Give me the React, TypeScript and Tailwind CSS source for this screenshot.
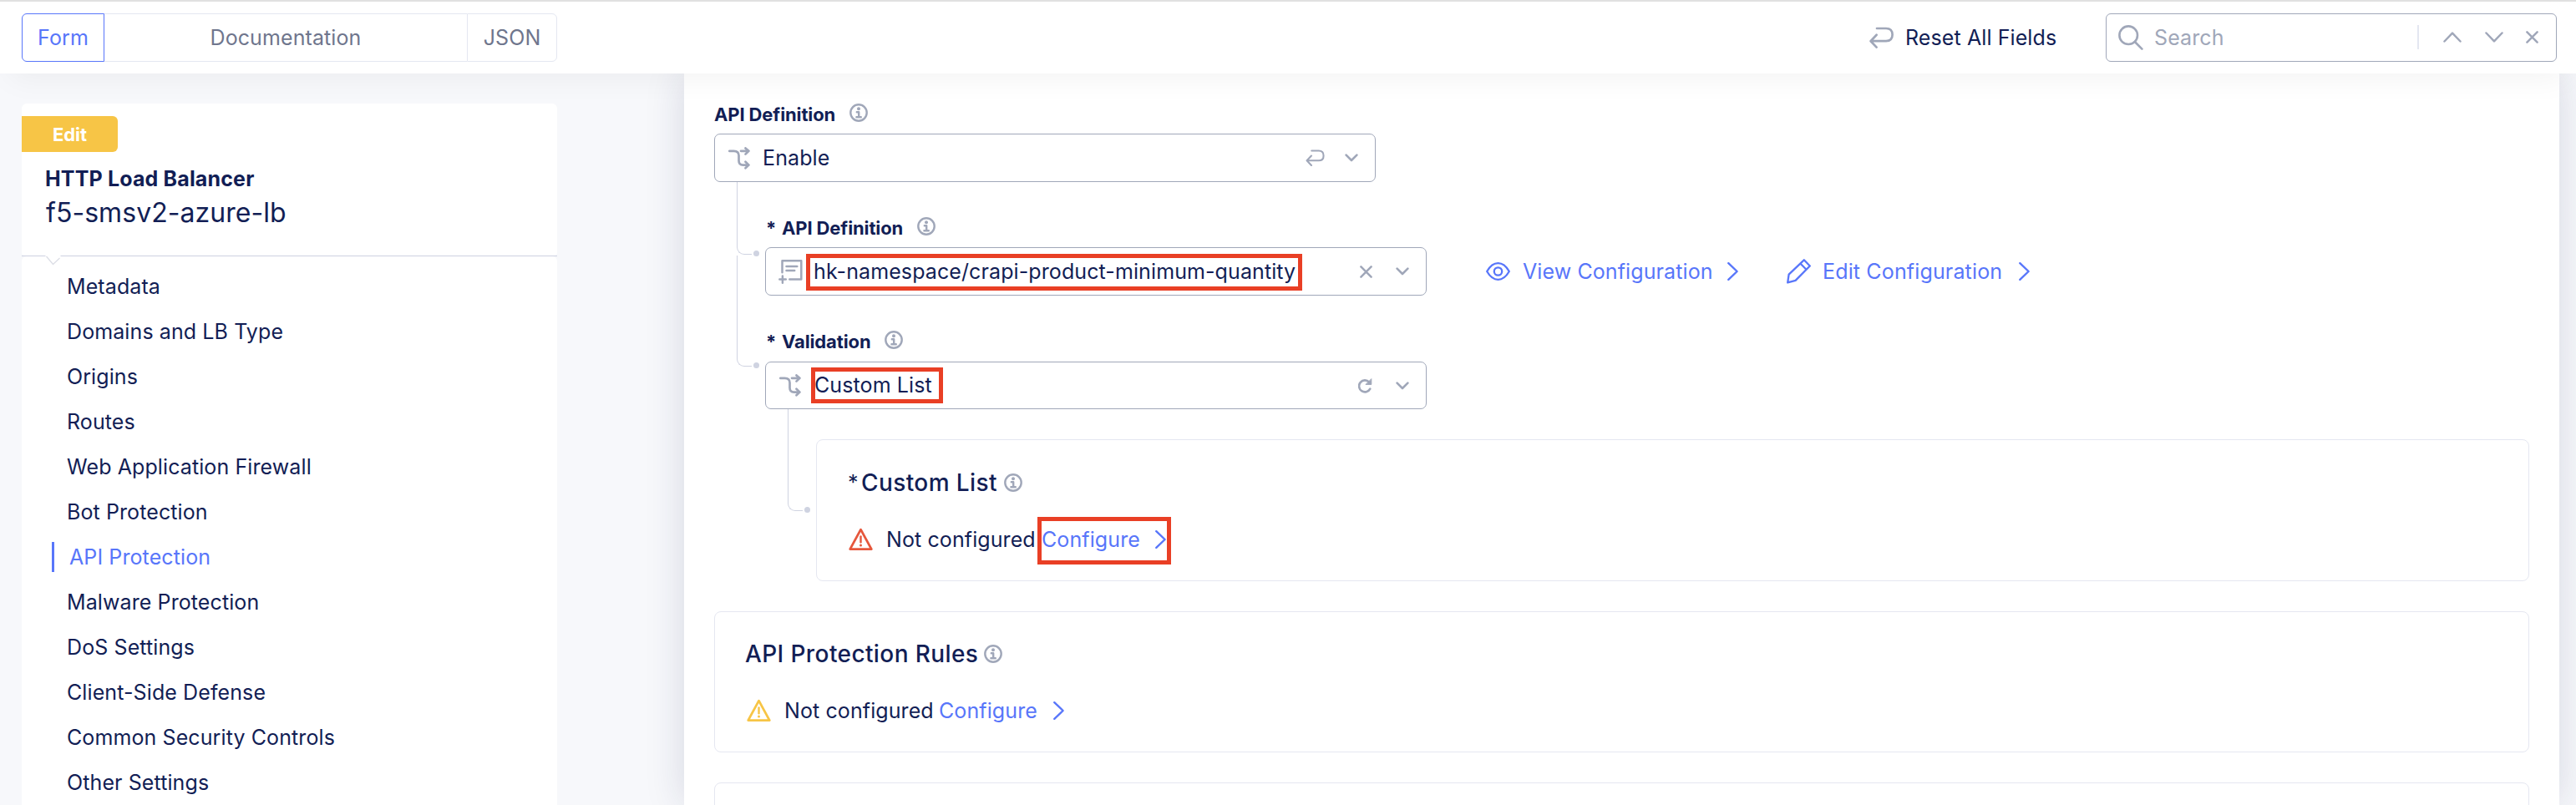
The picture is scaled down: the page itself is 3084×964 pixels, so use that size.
import type { ReactNode } from "react";

type IconProps = { className?: string };

const stroke = {
  fill: "none",
  stroke: "currentColor",
  strokeLinecap: "round" as const,
  strokeLinejoin: "round" as const,
};

const InfoIcon = ({ className = "" }: IconProps) => (
  <svg className={`size-[22px] shrink-0 text-[#a0a7b9] ${className}`} viewBox="0 0 22 22" {...stroke} strokeWidth={2.4}>
    <circle cx="11" cy="11" r="9.7" />
    <circle cx="11" cy="6.2" r="2" fill="currentColor" stroke="none" />
    <path d="M8.8 10.2H11.2V16.2M8.4 16.2H13.8" />
  </svg>
);

const ForkIcon = () => (
  <svg className="h-[27px] w-[26px] shrink-0 text-[#a0a7b9]" viewBox="0 0 26 27" {...stroke} strokeWidth={2.7}>
    <path d="M1.3 4.8H6.5Q12.5 4.8 12.5 10.3V16.5Q12.5 21.6 17.5 21.6H24" />
    <path d="M15 4.8H24M20.5 1.4L24.4 4.8L20.5 8.6M20.5 17.8L24.4 21.6L20.5 25.3" />
  </svg>
);

const DocumentIcon = () => (
  <svg className="h-[29px] w-[29px] shrink-0 text-[#a0a7b9]" viewBox="0 0 29 29" {...stroke} strokeWidth={2.5}>
    <path d="M4.5 15.3V1.3H27.3V23.6H13.3M9.5 8H22.3M9.5 13H19.2M4.9 19.5V27.7M1.3 23.6H8.8" />
  </svg>
);

const ReturnIcon = ({ className = "" }: IconProps) => (
  <svg className={`shrink-0 text-[#a0a7b9] ${className}`} viewBox="0 0 29 26" {...stroke} strokeWidth={2.7}>
    <path d="M9 2H20C25 2 27.6 5 27.6 9.6S25 17.2 20 17.2H1.8M8.6 9.8L1.6 17.2L8.6 24.6" />
  </svg>
);

const SmallChevron = () => (
  <svg className="h-[10px] w-[16px] shrink-0 text-[#a0a7b9]" viewBox="0 0 16 10" {...stroke} strokeWidth={2.6}>
    <path d="M1.6 1.6L8 8L14.4 1.6" />
  </svg>
);

const CrossIcon = () => (
  <svg className="size-[15px] shrink-0 text-[#a0a7b9]" viewBox="0 0 15 15" {...stroke} strokeWidth={2.5}>
    <path d="M1.4 1.4L13.6 13.6M13.6 1.4L1.4 13.6" />
  </svg>
);

const ReloadIcon = () => (
  <svg className="h-[18px] w-[17px] shrink-0 text-[#a0a7b9]" viewBox="0 0 17 18" {...stroke} strokeWidth={2.6}>
    <path d="M14.3 12.6A7 7 0 1 1 13.2 4.6" />
    <path d="M15.8 1V7.4H9.4Z" fill="currentColor" strokeWidth={1} />
  </svg>
);

const NextChevron = ({ className = "" }: IconProps) => (
  <svg className={`h-[22px] w-[13px] shrink-0 text-[#5876fa] ${className}`} viewBox="0 0 13 22" {...stroke} strokeWidth={2.4}>
    <path d="M1.3 1.2L11.6 11L1.3 20.8" />
  </svg>
);

const EyeIcon = () => (
  <svg className="h-[22px] w-[29px] shrink-0" viewBox="0 0 29 22" {...stroke} strokeWidth={2.3}>
    <path d="M1.2 11C5 4.4 9.2 1.2 14.5 1.2S24 4.4 27.8 11C24 17.6 19.8 20.8 14.5 20.8S5 17.6 1.2 11Z" />
    <circle cx="14.5" cy="11" r="4.7" />
  </svg>
);

const PencilIcon = () => (
  <svg className="h-[30px] w-[29px] shrink-0" viewBox="0 0 29 30" {...stroke} strokeWidth={2.3}>
    <path d="M20.8 1.3L27.8 8.5L10.6 25.9L1.2 28.4L2.6 18.6ZM16.6 5.8L23.5 12.8" />
  </svg>
);

const WarningIcon = ({ className = "" }: IconProps) => (
  <svg className={`h-[28px] w-[29px] shrink-0 ${className}`} viewBox="0 0 29 28" {...stroke} strokeWidth={2.8}>
    <path d="M14.5 2.2L27.3 25.6H1.7Z" />
    <path d="M14.5 10.5V17.2" strokeWidth={2.4} />
    <circle cx="14.5" cy="21.1" r="1.5" fill="currentColor" stroke="none" />
  </svg>
);

const SearchIcon = () => (
  <svg className="size-[30px] shrink-0 text-[#a0a7b9]" viewBox="0 0 30 30" {...stroke} strokeWidth={2.6}>
    <circle cx="12.2" cy="12.2" r="10.8" />
    <path d="M19.8 20L28.4 28.6" />
  </svg>
);

const NAV = [
  "Metadata",
  "Domains and LB Type",
  "Origins",
  "Routes",
  "Web Application Firewall",
  "Bot Protection",
  "API Protection",
  "Malware Protection",
  "DoS Settings",
  "Client-Side Defense",
  "Common Security Controls",
  "Other Settings",
];

function Header() {
  return (
    <header className="relative z-10 flex h-[88px] shrink-0 items-center border-t-2 border-[#e0e0e0] bg-white pr-[23px] pb-px pl-[26px] shadow-[0_18px_36px_-12px_rgba(0,0,0,0.05)]">
      <div className="flex h-[58px] w-[641px] text-[#6f768d]">
        <div className="flex w-[99px] items-center justify-center rounded-l-[6px] border border-[#5876fa] text-[#5876fa]">Form</div>
        <div className="flex flex-1 items-center justify-center border-y border-[#e4e7f1]">Documentation</div>
        <div className="flex w-[108px] items-center justify-center rounded-r-[6px] border border-[#e4e7f1]">JSON</div>
      </div>
      <div className="ml-auto flex items-center">
        <ReturnIcon className="mr-[14px] h-[26px] w-[29px]" />
        <span className="w-[182px]">Reset All Fields</span>
      </div>
      <div className="ml-[58px] flex h-[58px] w-[540px] items-center rounded-[6px] border border-[#a0a7b9] pl-[14px] text-[#a0a7b9]">
        <SearchIcon />
        <span className="ml-[13px]">Search</span>
        <div className="ml-auto h-[29px] w-[2px] bg-[#e4e7f1]" />
        <svg className="ml-[29px] h-[13px] w-[22px]" viewBox="0 0 22 13" {...stroke} strokeWidth={2.5}>
          <path d="M1.5 11.5L11 1.7L20.5 11.5" />
        </svg>
        <svg className="ml-[28px] h-[13px] w-[22px]" viewBox="0 0 22 13" {...stroke} strokeWidth={2.5}>
          <path d="M1.5 1.5L11 11.3L20.5 1.5" />
        </svg>
        <div className="mr-[21px] ml-[27px]">
          <CrossIcon />
        </div>
      </div>
    </header>
  );
}

function Sidebar() {
  return (
    <aside className="mt-[36px] ml-[26px] flex w-[641px] shrink-0 flex-col">
      <div className="h-[182px] rounded-t-[6px] rounded-b-[4px] bg-white pt-[15px]">
        <div className="flex h-[43px] w-[115px] items-center justify-center rounded-r-[6px] bg-[#f7c546] text-[22px] font-bold tracking-normal text-white">
          Edit
        </div>
        <div className="mt-[16px] ml-[28px] text-[25px] leading-[32px] font-bold tracking-[0.15px]">HTTP Load Balancer</div>
        <div className="mt-[5px] ml-[29px] text-[32px] leading-[40px] tracking-[0.05px]">f5-smsv2-azure-lb</div>
      </div>
      <div className="relative h-px bg-[#cdd1e1]">
        <svg className="absolute top-0 left-[28px] h-[12px] w-[20px]" viewBox="0 0 20 12">
          <path d="M0 0H18.5V2L9.5 10.5L1 1Z" fill="#fff" />
          <path d="M1.5 1L9.5 10.5L17.5 3" fill="none" stroke="#dcdee6" strokeWidth="1.3" />
        </svg>
      </div>
      <nav className="flex-1 rounded-t-[6px] bg-white pt-[9px] pl-[36px]">
        {NAV.map((item) =>
          item === "API Protection" ? (
            <div key={item} className="flex h-[54px] items-center text-[#5876fa]">
              <div className="h-[36px] w-[3px] bg-[#5876fa]" />
              <span className="ml-[18px]">{item}</span>
            </div>
          ) : (
            <div key={item} className="flex h-[54px] items-center pl-[18px]">
              {item}
            </div>
          ),
        )}
      </nav>
    </aside>
  );
}

function FieldLabel({ text, required, className }: { text: string; required?: boolean; className: string }) {
  return (
    <div className={`flex h-[28px] items-center text-[22px] leading-[28px] font-bold tracking-[-0.12px] ${className}`}>
      {required && <span className="ml-px w-[19px]">*</span>}
      <span>{text}</span>
      <InfoIcon className="-mt-[4px] ml-[17px]" />
    </div>
  );
}

function SelectBox({ icon, children, action, className }: { icon: ReactNode; children: ReactNode; action: ReactNode; className: string }) {
  return (
    <div className={`flex w-[792px] shrink-0 items-center rounded-[7px] border border-[#a0a7b9] bg-white ${className}`}>
      {icon}
      {children}
      <div className="ml-auto flex items-center">{action}</div>
      <div className="mr-[20px] ml-[28px]">
        <SmallChevron />
      </div>
    </div>
  );
}

function Connector({ className }: { className: string }) {
  return (
    <div className={`absolute w-[27px] ${className}`}>
      <div className="h-full w-[18px] rounded-bl-[9px] border-b border-l border-[#cfd3e1]" />
      <div className="absolute right-0 -bottom-[2px] size-[7px] rounded-full bg-[#cfd3e1]" />
    </div>
  );
}

const Highlight = ({ className }: { className: string }) => (
  <div className={`absolute border-[5px] border-[#e93f25] ${className}`} />
);

export default function App() {
  return (
    <div className="flex h-[964px] w-[3084px] flex-col overflow-hidden bg-[#f7f8fb] font-['Inter',sans-serif] text-[25px] leading-[36px] tracking-[0.1px] whitespace-nowrap text-[#121e55]">
      <Header />
      <div className="flex min-h-0 flex-1">
        <Sidebar />
        <main className="mr-[20px] ml-auto w-[2245px] bg-white px-[36px] shadow-[0_0_44px_rgba(24,36,80,0.15)]">
          <FieldLabel text="API Definition" className="mt-[35px]" />
          <SelectBox
            className="mt-[9px] h-[58px]"
            icon={<div className="mr-[15px] ml-[16px]"><ForkIcon /></div>}
            action={<ReturnIcon className="-mr-[4px] h-[20px] w-[23px]" />}
          >
            <span>Enable</span>
          </SelectBox>

          <div className="relative pl-[61px]">
            <Connector className="top-0 left-[27px] h-[87px]" />
            <Connector className="top-[88px] left-[27px] h-[133px]" />
            <div className="h-[41px]" />
            <FieldLabel text="API Definition" required className="" />
            <div className="mt-[9px] flex items-center">
              <SelectBox
                className="h-[58px]"
                icon={<div className="mr-[13px] ml-[15px]"><DocumentIcon /></div>}
                action={<CrossIcon />}
              >
                <span className="relative">
                  hk-namespace/crapi-product-minimum-quantity
                  <Highlight className="-top-[3px] -left-[9px] h-[44px] w-[594px]" />
                </span>
              </SelectBox>
              <div className="ml-[71px] flex items-center text-[#5876fa]">
                <EyeIcon />
                <span className="ml-[15px] w-[230px]">View Configuration</span>
                <NextChevron className="ml-[15px]" />
              </div>
              <div className="ml-[58px] flex items-center text-[#5876fa]">
                <PencilIcon />
                <span className="ml-[14px] w-[218px] tracking-[0.15px]">Edit Configuration</span>
                <NextChevron className="ml-[17px]" />
              </div>
            </div>
            <FieldLabel text="Validation" required className="mt-[41px]" />
            <SelectBox
              className="mt-[10px] h-[57px]"
              icon={<div className="mr-[16px] ml-[16px]"><ForkIcon /></div>}
              action={<ReloadIcon />}
            >
              <span className="relative -mt-px">
                Custom List
                <Highlight className="-top-[3px] -left-[4px] h-[43px] w-[158px]" />
              </span>
            </SelectBox>

            <div className="relative pt-[36px] pl-[61px]">
              <Connector className="top-0 left-[27px] h-[122px]" />
              <section className="h-[170px] rounded-[8px] border border-[#e5e7f1] pt-[33px] pl-[37px]">
                <div className="flex h-[36px] items-center">
                  <span className="w-[16px]">*</span>
                  <h2 className="text-[28px] font-medium tracking-[0.4px]">Custom List</h2>
                  <InfoIcon className="ml-[8px]" />
                </div>
                <div className="mt-[32px] flex h-[36px] items-center">
                  <WarningIcon className="ml-px text-[#e6573c]" />
                  <span className="ml-[16px] w-[186px]">Not configured</span>
                  <span className="relative flex items-center text-[#5876fa]">
                    <span className="w-[136px]">Configure</span>
                    <NextChevron />
                    <Highlight className="-top-[9px] -left-[5px] h-[57px] w-[160px]" />
                  </span>
                </div>
              </section>
            </div>
          </div>

          <section className="mt-[36px] h-[169px] rounded-[8px] border border-[#e5e7f1] pt-[32px] pl-[36px]">
            <div className="flex h-[36px] items-center">
              <h2 className="text-[28px] font-medium tracking-[0.4px]">API Protection Rules</h2>
              <InfoIcon className="ml-[7px]" />
            </div>
            <div className="mt-[32px] flex h-[36px] items-center">
              <WarningIcon className="ml-[2px] text-[#f7c546]" />
              <span className="ml-[16px] w-[185px]">Not configured</span>
              <span className="w-[137px] text-[#5876fa]">Configure</span>
              <NextChevron />
            </div>
          </section>

          <section className="mt-[36px] h-[169px] rounded-[8px] border border-[#e5e7f1]" />
        </main>
      </div>
    </div>
  );
}
